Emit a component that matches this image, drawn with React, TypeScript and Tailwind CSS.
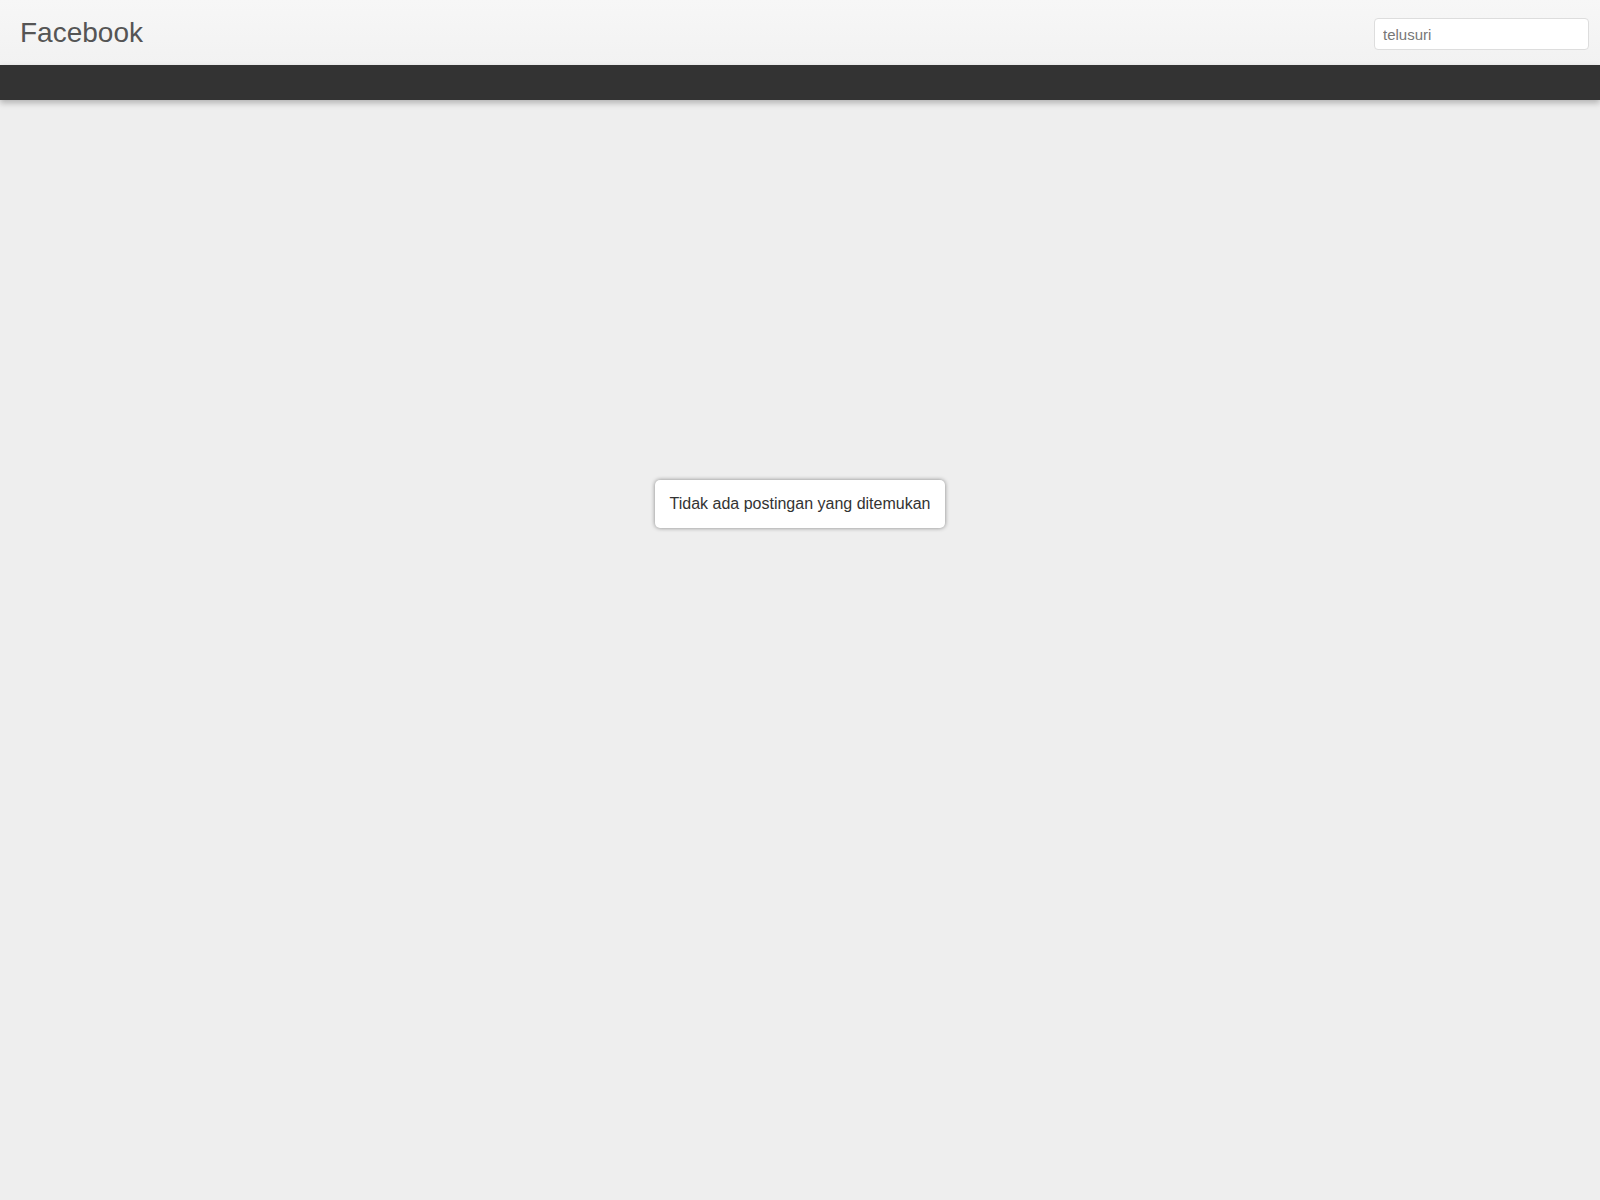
export default function App() {
  return (
    <div className="min-h-screen bg-[#eeeeee] font-['Liberation_Sans',Arial,sans-serif]">
      <header className="h-[65px] bg-gradient-to-b from-[#f7f7f7] to-[#f2f2f2] flex items-center justify-between pl-5 pr-[11px]">
        <a className="text-[28px] text-[#555555] leading-none">Facebook</a>
        <input
          type="text"
          placeholder="telusuri"
          className="self-start mt-[18px] w-[215px] h-[32px] bg-white border border-[#dddddd] rounded-[4px] px-2 text-[15px] text-[#555] placeholder:text-[#777777] outline-none"
        />
      </header>
      <nav className="h-[35px] bg-[#333333] shadow-[0_3px_6px_rgba(0,0,0,0.25)]" />
      <main className="flex justify-center pt-[380px]">
        <div className="bg-white rounded-[5px] shadow-[0_0_4px_rgba(0,0,0,0.45)] px-[15px] h-[48px] flex items-center text-[16px] text-[#333333]">
          Tidak ada postingan yang ditemukan
        </div>
      </main>
    </div>
  );
}
